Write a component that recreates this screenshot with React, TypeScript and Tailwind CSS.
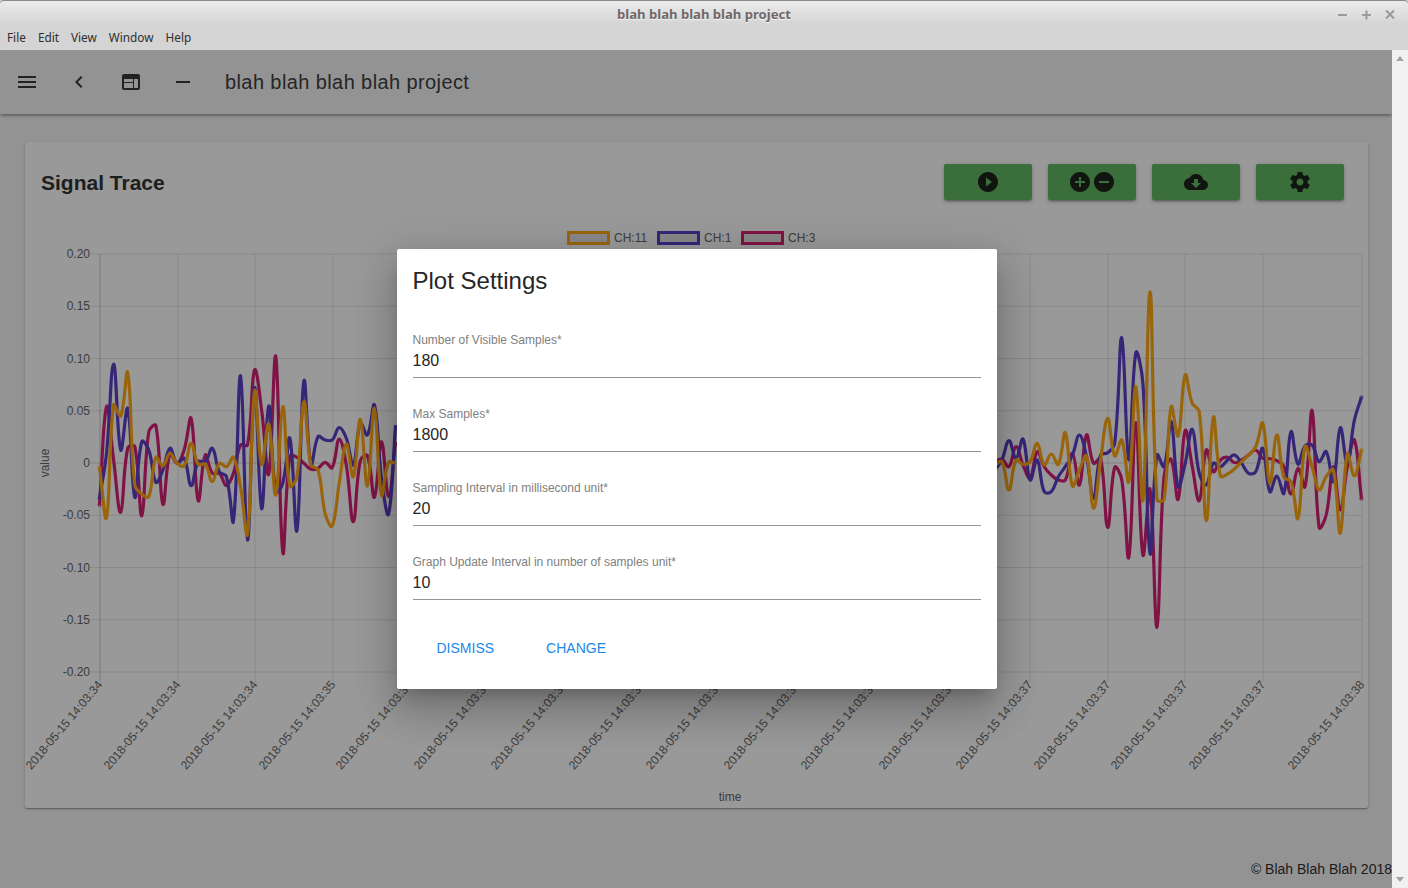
import React from "react";

// sample heights read off the screenshot (3x crops), converted to page pixels below
const purpleLeft = [835, 700, 432, 690, 565, 832, 665, 690, 787, 750, 685, 730, 715, 797, 725, 725, 685, 755, 770, 903, 467, 960, 503, 866, 558, 815, 790, 655, 932, 483, 735, 650, 660, 660, 623, 655, 735, 610, 645, 555, 775, 882, 615];
const redLeft = [855, 560, 720, 877, 685, 680, 887, 635, 617, 853, 700, 730, 690, 595, 842, 705, 760, 760, 797, 760, 675, 675, 450, 570, 762, 410, 997, 708, 712, 730, 748, 745, 727, 743, 657, 735, 905, 722, 707, 832, 665, 830, 665];
const orangeLeft = [742, 893, 555, 588, 458, 795, 822, 830, 712, 738, 700, 730, 737, 670, 733, 733, 785, 730, 740, 712, 800, 942, 513, 733, 612, 825, 560, 798, 770, 545, 735, 750, 880, 918, 790, 672, 770, 598, 798, 565, 825, 727, 730];

const purpleRight = [600, 570, 512, 565, 507, 630, 570, 665, 665, 620, 590, 555, 495, 560, 685, 555, 548, 520, 203, 570, 248, 340, 850, 555, 590, 455, 650, 580, 478, 610, 645, 580, 590, 570, 555, 580, 610, 605, 535, 665, 618, 670, 485, 582, 528, 525, 575, 545, 635, 473, 580, 450, 382];
const redRight = [575, 568, 590, 530, 585, 625, 545, 590, 615, 630, 630, 550, 645, 495, 580, 565, 772, 592, 630, 862, 458, 855, 658, 1072, 620, 568, 688, 482, 590, 692, 540, 605, 570, 562, 578, 570, 555, 540, 565, 566, 572, 590, 672, 595, 650, 422, 772, 735, 590, 720, 590, 510, 686];
const orangeRight = [585, 575, 660, 570, 583, 575, 520, 585, 552, 583, 488, 648, 600, 558, 715, 570, 445, 558, 510, 635, 350, 690, 65, 688, 688, 410, 498, 315, 400, 425, 752, 442, 618, 612, 597, 575, 555, 530, 460, 640, 495, 622, 635, 745, 530, 590, 660, 620, 600, 790, 552, 618, 540];

const sampleX = (i: number) => 99.5 + 7.05 * i;

// same bezier smoothing the chart library uses (tension 0.4)
function smoothPath(pts: number[][]) {
  const ctrl = (i: number) => {
    const cur = pts[i];
    const prev = pts[i - 1] || cur;
    const next = pts[i + 1] || cur;
    const d01 = Math.hypot(cur[0] - prev[0], cur[1] - prev[1]);
    const d12 = Math.hypot(next[0] - cur[0], next[1] - cur[1]);
    const sum = d01 + d12 || 1;
    const fa = (0.4 * d01) / sum;
    const fb = (0.4 * d12) / sum;
    return {
      before: [cur[0] - fa * (next[0] - prev[0]), cur[1] - fa * (next[1] - prev[1])],
      after: [cur[0] + fb * (next[0] - prev[0]), cur[1] + fb * (next[1] - prev[1])],
    };
  };
  let d = `M${pts[0][0]} ${pts[0][1]}`;
  for (let i = 1; i < pts.length; i++) {
    const a = ctrl(i - 1).after;
    const b = ctrl(i).before;
    d += `C${a[0].toFixed(1)} ${a[1].toFixed(1)} ${b[0].toFixed(1)} ${b[1].toFixed(1)} ${pts[i][0].toFixed(1)} ${pts[i][1].toFixed(1)}`;
  }
  return d;
}

const leftPoints = (ys: number[]) => ys.map((z, i) => [sampleX(i), 220 + z / 3]);
const rightPoints = (ys: number[]) => ys.map((z, i) => [sampleX(127 + i), 270 + z / 3]);

const series = [
  { color: "#d52174", left: leftPoints(redLeft), right: rightPoints(redRight) },
  { color: "#5d3fc8", left: leftPoints(purpleLeft), right: rightPoints(purpleRight) },
  { color: "#ffa915", left: leftPoints(orangeLeft), right: rightPoints(orangeRight) },
];

const gridY = [254, 306.25, 358.5, 410.75, 463, 515.25, 567.5, 619.75, 672];
const yLabels = ["0.20", "0.15", "0.10", "0.05", "0", "-0.05", "-0.10", "-0.15", "-0.20"];
const gridX = [100, 178, 255, 333, 410, 488, 565, 643, 720, 798, 875, 953, 1030, 1108, 1185, 1263, 1362];
const xSeconds = ["34", "34", "34", "35", "35", "35", "35", "36", "36", "36", "36", "36", "37", "37", "37", "37", "38"];

const legend = [
  { name: "CH:11", border: "border-[#ffa915]", w: "w-[90px]" },
  { name: "CH:1", border: "border-[#5d3fc8]", w: "w-[84px]" },
  { name: "CH:3", border: "border-[#d52174]", w: "w-[82px]" },
];

const fields = [
  { label: "Number of Visible Samples*", value: "180" },
  { label: "Max Samples*", value: "1800" },
  { label: "Sampling Interval in millisecond unit*", value: "20" },
  { label: "Graph Update Interval in number of samples unit*", value: "10" },
];

function Icon({ d, className }: { d: string; className?: string }) {
  return (
    <svg viewBox="0 0 24 24" className={className || "w-6 h-6"} fill="currentColor">
      <path d={d} />
    </svg>
  );
}

function Chart() {
  return (
    <svg viewBox="25 222 1343 586" className="block w-[1343px] h-[586px] overflow-visible">
      {gridY.map((y, i) => (
        <line key={y} x1={90} x2={1362} y1={y} y2={y} stroke="#000" strokeOpacity={i === 4 ? 0.16 : 0.1} />
      ))}
      {gridX.map((x, i) => (
        <line key={x} x1={x} x2={x} y1={254} y2={682} stroke="#000" strokeOpacity={i === 0 ? 0.2 : 0.1} />
      ))}
      {yLabels.map((t, i) => (
        <text key={t} x={90} y={gridY[i] + 4} textAnchor="end" fontSize={12} fill="#666">
          {t}
        </text>
      ))}
      {gridX.map((x, i) => (
        <text
          key={x}
          transform={`translate(${x + 3} 685) rotate(-50)`}
          textAnchor="end"
          fontSize={12}
          fill="#666"
        >
          {`2018-05-15 14:03:${xSeconds[i]}`}
        </text>
      ))}
      <text transform="translate(49 463) rotate(-90)" textAnchor="middle" fontSize={12} fill="#666">
        value
      </text>
      <text x={730} y={801} textAnchor="middle" fontSize={12} fill="#666">
        time
      </text>
      {series.map((s) => (
        <g key={s.color} fill="none" stroke={s.color}>
          <path d={smoothPath(s.left)} strokeWidth={3.2} />
          <path d={smoothPath(s.right)} strokeWidth={3.2} />
          <circle cx={s.left[0][0]} cy={s.left[0][1]} r={1.5} strokeWidth={1} />
          <circle
            cx={s.right[s.right.length - 1][0]}
            cy={s.right[s.right.length - 1][1]}
            r={1.5}
            strokeWidth={1}
          />
        </g>
      ))}
    </svg>
  );
}

export default function App() {
  return (
    <div className="h-[888px] w-[1408px] flex flex-col overflow-hidden bg-[#d4d4d4] font-['Liberation_Sans',sans-serif]">
      {/* Window chrome */}
      <div className="h-[50px] shrink-0 flex flex-col rounded-t-[4px] border-t border-[#8a8a8a] bg-gradient-to-b from-[#ebebeb] to-[#d4d4d4] to-50%">
        <div className="relative h-[27px] flex items-center justify-center">
          <span className="font-['Noto_Sans',sans-serif] font-bold text-[13.100px] text-[#6e6868] [text-shadow:0_1px_0_#f4f4f4]">
            blah blah blah blah project
          </span>
          <svg viewBox="0 0 64 12" className="absolute right-[6px] top-[7px] w-[64px] h-[12px] text-[#9a9a9a]" stroke="currentColor" strokeWidth="2">
            <path d="M0 7h9" />
            <path d="M24 7h9M28.500 2.500v9" />
            <path d="M48 2.500l8 8M56 2.500l-8 8" />
          </svg>
        </div>
        <div className="flex gap-3 pl-[7px] font-['Noto_Sans',sans-serif] text-[11.800px] leading-[19px] text-[#2e2e2e]">
          <span>File</span>
          <span>Edit</span>
          <span>View</span>
          <span>Window</span>
          <span>Help</span>
        </div>
      </div>

      <div className="flex-1 flex min-h-0">
        <main className="relative flex-1 flex flex-col bg-[#f5f5f5] overflow-hidden">
          {/* App bar */}
          <header className="h-16 shrink-0 flex items-center pl-[15px] bg-[#f5f5f5] shadow-[0_2px_4px_-1px_rgba(0,0,0,0.35),0_1px_3px_0_rgba(0,0,0,0.2)]">
            <div className="flex gap-7 text-[#3a3a3a]">
              <Icon d="M3 18h18v-2H3v2zm0-5h18v-2H3v2zm0-7v2h18V6H3z" />
              <Icon d="M15.41 7.410L14 6l-6 6 6 6 1.410-1.410L10.830 12z" />
              <Icon d="M19 4H5c-1.110 0-2 .9-2 2v12c0 1.100.89 2 2 2h14c1.100 0 2-.9 2-2V6c0-1.100-.9-2-2-2zM14 18H5v-5h9v5zm0-6H5V9h9v3zm5 6h-4V9h4v9z" />
              <Icon d="M19 13H5v-2h14v2z" />
            </div>
            <h1 className="ml-[30px] text-[20px] tracking-[0.4px] font-normal text-[#404040]">blah blah blah blah project</h1>
          </header>

          {/* Signal trace card */}
          <section className="mt-[28px] ml-[25px] mr-6 h-[666px] shrink-0 rounded-[2px] bg-white shadow-[0_1px_3px_0_rgba(0,0,0,0.2),0_1px_1px_0_rgba(0,0,0,0.14),0_2px_1px_-1px_rgba(0,0,0,0.12)]">
            <div className="h-[80px] flex items-start justify-between pl-4 pr-6 pt-[22px]">
              <h2 className="text-[21px] leading-[38px] font-bold text-[#333]">Signal Trace</h2>
              <div className="flex gap-4 text-[#1c241c]">
                <button className="w-[88px] h-9 flex items-center justify-center rounded-[2px] bg-[#61b861] shadow-[0_1px_5px_0_rgba(0,0,0,0.2),0_2px_2px_0_rgba(0,0,0,0.14),0_3px_1px_-2px_rgba(0,0,0,0.12)]">
                  <Icon d="M12 2C6.480 2 2 6.480 2 12s4.480 10 10 10 10-4.480 10-10S17.520 2 12 2zm-2 14.500v-9l6 4.500-6 4.500z" />
                </button>
                <button className="w-[88px] h-9 flex items-center justify-center rounded-[2px] bg-[#61b861] shadow-[0_1px_5px_0_rgba(0,0,0,0.2),0_2px_2px_0_rgba(0,0,0,0.14),0_3px_1px_-2px_rgba(0,0,0,0.12)]">
                  <Icon d="M12 2C6.480 2 2 6.480 2 12s4.480 10 10 10 10-4.480 10-10S17.520 2 12 2zm5 11h-4v4h-2v-4H7v-2h4V7h2v4h4v2z" />
                  <Icon d="M12 2C6.480 2 2 6.480 2 12s4.480 10 10 10 10-4.480 10-10S17.520 2 12 2zm5 11H7v-2h10v2z" />
                </button>
                <button className="w-[88px] h-9 flex items-center justify-center rounded-[2px] bg-[#61b861] shadow-[0_1px_5px_0_rgba(0,0,0,0.2),0_2px_2px_0_rgba(0,0,0,0.14),0_3px_1px_-2px_rgba(0,0,0,0.12)]">
                  <Icon d="M19.350 10.040C18.670 6.590 15.640 4 12 4 9.110 4 6.600 5.640 5.350 8.040 2.340 8.360 0 10.910 0 14c0 3.310 2.690 6 6 6h13c2.760 0 5-2.240 5-5 0-2.640-2.050-4.780-4.650-4.960zM17 13l-5 5-5-5h3V9h4v4h3z" />
                </button>
                <button className="w-[88px] h-9 flex items-center justify-center rounded-[2px] bg-[#61b861] shadow-[0_1px_5px_0_rgba(0,0,0,0.2),0_2px_2px_0_rgba(0,0,0,0.14),0_3px_1px_-2px_rgba(0,0,0,0.12)]">
                  <Icon d="M19.430 12.980c.04-.32.07-.64.07-.98s-.03-.66-.07-.98l2.110-1.650c.19-.15.24-.42.12-.64l-2-3.460c-.12-.22-.39-.3-.61-.22l-2.490 1c-.52-.4-1.080-.73-1.690-.98l-.38-2.650C14.460 2.180 14.250 2 14 2h-4c-.25 0-.46.18-.49.42l-.38 2.650c-.61.25-1.170.59-1.690.98l-2.490-1c-.23-.09-.49 0-.61.22l-2 3.460c-.13.22-.07.49.12.64l2.110 1.650c-.04.32-.07.65-.07.98s.03.66.07.98l-2.110 1.650c-.19.15-.24.42-.12.64l2 3.460c.12.22.39.3.61.22l2.490-1c.52.4 1.080.73 1.690.98l.38 2.650c.03.24.24.42.49.42h4c.25 0 .46-.18.49-.42l.38-2.650c.61-.25 1.170-.59 1.690-.98l2.490 1c.23.09.49 0 .61-.22l2-3.460c.12-.22.07-.49-.12-.64l-2.110-1.650zM12 15.500c-1.930 0-3.500-1.570-3.500-3.500s1.570-3.500 3.500-3.500 3.500 1.570 3.500 3.500-1.570 3.500-3.500 3.500z" />
                </button>
              </div>
            </div>
            <div className="relative">
              {/* legend sits over the top of the plot */}
              <div className="absolute left-[545px] top-[9px] flex items-center text-[12px] leading-[12px] text-[#666]">
                {legend.map((l) => (
                  <div key={l.name} className={`flex items-center gap-[4px] ${l.w}`}>
                    <span className={`w-[37px] h-[8px] box-content border-[3px] -ml-[3px] bg-black/10 ${l.border}`} />
                    <span>{l.name}</span>
                  </div>
                ))}
              </div>
              <Chart />
            </div>
          </section>

          <footer className="mt-auto pb-[10px] text-right text-[14px] leading-[18px] text-[#303030]">
            © Blah Blah Blah 2018
          </footer>

          {/* Plot settings dialog */}
          <div className="absolute inset-0 pl-[2px] flex items-center justify-center bg-black/40">
            <div className="w-[600px] h-[440px] rounded-[2px] bg-white shadow-[0_11px_15px_-7px_rgba(0,0,0,0.2),0_24px_38px_3px_rgba(0,0,0,0.14),0_9px_46px_8px_rgba(0,0,0,0.12)]">
              <h2 className="px-[15.500px] pt-4 text-[24px] leading-8 font-normal text-[#262626]">Plot Settings</h2>
              <div className="mt-9 px-4 flex flex-col gap-[29px]">
                {fields.map((f) => (
                  <div key={f.label} className="border-b border-[#949494] pb-[2px]">
                    <div className="-ml-[0.5px] text-[12px] leading-[14px] text-[#808080]">{f.label}</div>
                    <div className="-ml-[0.5px] text-[16px] leading-[28px] text-[#262626]">{f.value}</div>
                  </div>
                ))}
              </div>
              <div className="mt-[30px] pl-[39.500px] flex gap-[52px] h-9 items-center text-[14px] text-[#1e88e5]">
                <button>DISMISS</button>
                <button>CHANGE</button>
              </div>
            </div>
          </div>
        </main>

        {/* Scrollbar */}
        <div className="w-4 shrink-0 flex flex-col items-center justify-between py-[6px] bg-[#f1f1f1]">
          <svg viewBox="0 0 8 5" className="w-2 h-[5px] text-[#a3a3a3]" fill="currentColor">
            <path d="M4 0l4 5H0z" />
          </svg>
          <svg viewBox="0 0 8 5" className="w-2 h-[5px] text-[#a3a3a3]" fill="currentColor">
            <path d="M0 0h8L4 5z" />
          </svg>
        </div>
      </div>
    </div>
  );
}
